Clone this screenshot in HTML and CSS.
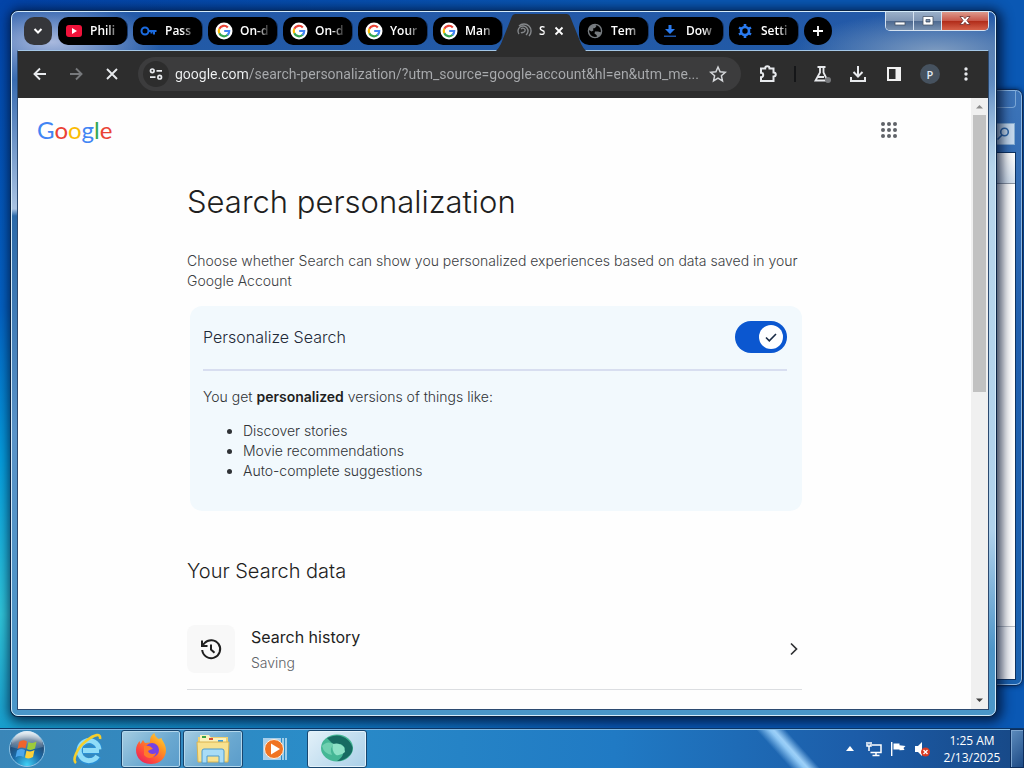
FILE: index.html
```html
<!DOCTYPE html>
<html lang="en">
<head>
<meta charset="utf-8">
<meta name="viewport" content="width=device-width, initial-scale=1">
<title>Search personalization</title>
<link rel="stylesheet" href="styles.css">
</head>
<body>
<svg class="defs" aria-hidden="true">
  <symbol id="g" viewBox="0 0 18 18">
    <circle cx="9" cy="9" r="8.500" fill="#fff"/>
    <g fill="none" stroke-width="2.2">
      <path d="M4.300 6.800A5.200 5.200 0 0 1 12.800 5.400" stroke="#ea4335"/>
      <path d="M4.300 11.300A5.200 5.200 0 0 1 4.300 6.700" stroke="#fbbc05"/>
      <path d="M12.700 12.800A5.200 5.200 0 0 1 4.300 11.200" stroke="#34a853"/>
      <path d="M9.2 9H14.200A5.200 5.200 0 0 1 12.500 12.900" stroke="#4285f4"/>
    </g>
  </symbol>
  <symbol id="globe" viewBox="0 0 16 16">
    <circle cx="8" cy="8" r="6.6" fill="none" stroke="#777c80" stroke-width="1.4"/>
    <path d="M2 5.5C3 3 5.500 1.600 8 1.500L9.500 3 8 5l-2 .6L6.400 7.500 4.500 8.600 2 7zM8 8.500h3l3.500 1-1.500 3L10.500 14.500 9.500 12 7.500 10.500z" fill="#777c80"/>
  </symbol>
</svg>

<div class="desktop">
  <main class="workspace">
    <section class="back-window" aria-label="Background window">
      <div class="back-bar"></div>
      <div class="back-search">
        <svg width="14" height="14" viewBox="0 0 14 14" fill="none" stroke="#2d67a8" stroke-width="1.600"><circle cx="8.500" cy="5" r="3.800"/><path d="M6 8 1.500 12.500"/></svg>
      </div>
      <div class="back-body"><div class="back-head"></div><div class="back-foot"></div></div>
    </section>

    <section class="window" aria-label="Browser">
      <div class="tabstrip">
        <button class="tab-search" aria-label="Search tabs"><svg width="12" height="12" viewBox="0 0 12 12" fill="none" stroke="#fff" stroke-width="2"><path d="M2.500 4 6 7.500 9.500 4"/></svg></button>
        <button class="tab"><svg width="18" height="14" viewBox="0 0 18 14"><rect x="1" y="1" width="16" height="12" rx="3" fill="#f0123a"/><path d="M7 4v6l5-3z" fill="#fff"/></svg><span>Phili</span></button>
        <button class="tab"><svg width="18" height="16" viewBox="0 0 18 16" fill="none" stroke="#1b6be0" stroke-width="2"><circle cx="5" cy="8" r="3.500"/><path d="M8.500 8H16.500M14 8v3.500M11.500 8v2.500"/></svg><span>Pass</span></button>
        <button class="tab"><svg width="18" height="18"><use href="#g"/></svg><span>On-d</span></button>
        <button class="tab"><svg width="18" height="18"><use href="#g"/></svg><span>On-d</span></button>
        <button class="tab"><svg width="18" height="18"><use href="#g"/></svg><span>Your</span></button>
        <button class="tab"><svg width="18" height="18"><use href="#g"/></svg><span>Man</span></button>
        <div class="tab-active">
          <svg class="tab-shape" viewBox="0 0 92 37" preserveAspectRatio="none" fill="#2d2d2d"><path d="M0 37Q3 34 5 30L16 3Q17 0 20 0H72Q75 0 76 3L87 30Q89 34 92 37z"/></svg>
          <svg class="spin" width="16" height="16" viewBox="0 0 16 16" fill="none" stroke="#85888b" stroke-width="1.400"><path d="M3 3A7 7 0 0 1 13 13"/><path d="M3 11A5 5 0 1 1 10 12"/><path d="M5 6c2-2 5 0 4 2s-3 1-4 2"/></svg>
          <span>S</span>
          <button class="tab-close" aria-label="Close tab"><svg width="10" height="10" viewBox="0 0 10 10" stroke="#fff" stroke-width="1.800"><path d="M1.500 1.500l7 7M8.500 1.500l-7 7"/></svg></button>
        </div>
        <button class="tab"><svg width="16" height="16"><use href="#globe"/></svg><span>Tem</span></button>
        <button class="tab"><svg width="16" height="16" viewBox="0 0 16 16" fill="#2a7bf0"><path d="M6.500 2h3v4H13l-5 5-5-5h3.500z"/><path d="M2 12.500h12V14H2z" fill="#1d54a8"/></svg><span>Dow</span></button>
        <button class="tab"><svg width="16" height="16" viewBox="0 0 16 16" fill="none" stroke="#2a7bf0"><circle cx="8" cy="8" r="4" stroke-width="2.600"/><path d="M8 1v3M8 12v3M2 4.500l2.500 1.500M11.500 10l2.500 1.500M2 11.500 4.500 10M11.500 6 14 4.500" stroke-width="2.600"/></svg><span>Setti</span></button>
        <button class="tab-new" aria-label="New tab"><svg width="12" height="12" viewBox="0 0 12 12" stroke="#fff" stroke-width="1.800"><path d="M6 1v10M1 6h10"/></svg></button>
        <div class="captions">
          <button class="cap" aria-label="Minimize"><svg width="14" height="12" viewBox="0 0 14 12"><rect x="2" y="7" width="10" height="3" fill="#fff" stroke="#4a5668" stroke-width=".8"/></svg></button>
          <button class="cap" aria-label="Maximize"><svg width="14" height="12" viewBox="0 0 14 12"><path d="M2 1.500h10v8.500H2zM5 4.500v2.500h4V4.500z" fill="#fff" fill-rule="evenodd" stroke="#4a5668" stroke-width=".8"/></svg></button>
          <button class="cap cap-close" aria-label="Close"><svg width="14" height="12" viewBox="0 0 14 12"><path d="M2 1.500h3.200L7 3.700 8.800 1.500H12L8.900 5.500 12 9.500H8.800L7 7.300 5.200 9.500H2L5.100 5.500z" fill="#fff" stroke="#6a3030" stroke-width=".8"/></svg></button>
        </div>
      </div>

      <div class="client">
        <nav class="toolbar" aria-label="Navigation">
          <button class="tool" aria-label="Back"><svg width="16" height="16" viewBox="0 0 16 16" fill="none" stroke="#e8eaed" stroke-width="1.900"><path d="M14 8H3M8 2.500 2.500 8 8 13.500"/></svg></button>
          <button class="tool" aria-label="Forward"><svg width="16" height="16" viewBox="0 0 16 16" fill="none" stroke="#77797c" stroke-width="1.900"><path d="M2 8h11M8 2.500 13.500 8 8 13.500"/></svg></button>
          <button class="tool" aria-label="Stop"><svg width="16" height="16" viewBox="0 0 16 16" fill="none" stroke="#e8eaed" stroke-width="1.900"><path d="M3 3l10 10M13 3 3 13"/></svg></button>
          <div class="omnibox">
            <button class="site-info" aria-label="Site information"><svg width="14" height="14" viewBox="0 0 14 14" fill="none" stroke="#e8eaed" stroke-width="1.700"><circle cx="3.300" cy="3.800" r="1.800"/><path d="M7.500 3.800H13M1 10.200h5.500"/><circle cx="10.700" cy="10.200" r="1.800"/></svg></button>
            <input class="url" type="text" aria-label="Address" value="google.com/search-personalization/?utm_source=google-account&amp;hl=en&amp;utm_me...">
            <button class="star" aria-label="Bookmark"><svg width="18" height="18" viewBox="0 0 18 18" fill="none" stroke="#d5d7da" stroke-width="1.500"><path d="M9 2l2.100 4.800 5.200.5-3.900 3.500 1.100 5.100L9 13.200l-4.500 2.700 1.100-5.100L1.700 7.300l5.200-.5z"/></svg></button>
          </div>
          <div class="actions">
            <button class="tool" aria-label="Extensions"><svg width="20" height="20" viewBox="0 0 20 20" fill="none" stroke="#e8eaed" stroke-width="2"><path d="M3 4.500h4.200c0-3 4.300-3 4.300 0H15.500V8.500c3 0 3 4 0 4V17H3v-3.800c3 0 3-4.500 0-4.500z"/></svg></button>
            <span class="rule"></span>
            <button class="tool" aria-label="Labs"><svg width="20" height="20" viewBox="0 0 20 20" fill="none" stroke="#e8eaed" stroke-width="1.800"><path d="M5.500 3h8M8 3v5.500L3.500 16.500h12L11.500 8.500V3M6 13h6"/><circle cx="16" cy="16" r="3" fill="#77797c" stroke="none"/></svg></button>
            <button class="tool" aria-label="Downloads"><svg width="18" height="18" viewBox="0 0 18 18" fill="none" stroke="#e8eaed" stroke-width="2"><path d="M9 1v10M4.500 7 9 11.500 13.500 7M2 12v4h14v-4"/></svg></button>
            <button class="tool" aria-label="Side panel"><svg width="16" height="16" viewBox="0 0 16 16"><rect x="2" y="2" width="12" height="12" fill="none" stroke="#f1f1f1" stroke-width="2"/><path d="M9.500 2H14v12H9.500z" fill="#f1f1f1"/></svg></button>
            <button class="tool" aria-label="Profile"><span class="avatar">P</span></button>
            <button class="tool" aria-label="Menu"><svg width="16" height="16" viewBox="0 0 16 16" fill="#e8eaed"><circle cx="8" cy="3" r="1.700"/><circle cx="8" cy="8" r="1.700"/><circle cx="8" cy="13" r="1.700"/></svg></button>
          </div>
        </nav>

        <div class="viewport">
          <div class="page">
            <header class="page-head">
              <a class="logo" href="#" aria-label="Google"><span class="b">G</span><span class="r">o</span><span class="y">o</span><span class="b">g</span><span class="n">l</span><span class="r">e</span></a>
              <button class="apps" aria-label="Google apps"><svg width="18" height="18" viewBox="0 0 18 18" fill="#5f6368"><circle cx="3" cy="3" r="2"/><circle cx="9" cy="3" r="2"/><circle cx="15" cy="3" r="2"/><circle cx="3" cy="9" r="2"/><circle cx="9" cy="9" r="2"/><circle cx="15" cy="9" r="2"/><circle cx="3" cy="15" r="2"/><circle cx="9" cy="15" r="2"/><circle cx="15" cy="15" r="2"/></svg></button>
            </header>
            <article class="content">
              <h1>Search personalization</h1>
              <p class="lead">Choose whether Search can show you personalized experiences based on data saved in your Google Account</p>
              <section class="card">
                <div class="card-head">
                  <label for="personalize">Personalize Search</label>
                  <span class="switch">
                    <input id="personalize" type="checkbox" role="switch" checked>
                    <svg width="24" height="24" viewBox="0 0 24 24"><circle cx="12" cy="12" r="12" fill="#fff"/><path d="M7 12.500l3.300 3.300L17 9" fill="none" stroke="#1a2b45" stroke-width="1.600"/></svg>
                  </span>
                </div>
                <p>You get <b>personalized</b> versions of things like:</p>
                <ul>
                  <li>Discover stories</li>
                  <li>Movie recommendations</li>
                  <li>Auto-complete suggestions</li>
                </ul>
              </section>
              <h2>Your Search data</h2>
              <a class="row" href="#">
                <span class="row-icon"><svg width="24" height="24" viewBox="0 0 24 24" fill="none" stroke="#1f1f1f" stroke-width="2"><path d="M3.200 13A9 9 0 1 0 5.500 6.100L3.500 8.200M3 3.500V9h5.500M12 7.500V12.500l3.500 3.300"/></svg></span>
                <span class="row-text"><span class="row-title">Search history</span><span class="row-sub">Saving</span></span>
                <svg width="16" height="16" viewBox="0 0 16 16" fill="none" stroke="#303134" stroke-width="1.700"><path d="M5 2.500 10.500 8 5 13.500"/></svg>
              </a>
            </article>
          </div>
          <div class="scrollbar">
            <svg width="17" height="17" viewBox="0 0 17 17"><path d="M5 10.500h7L8.500 7z" fill="#8b8b8b"/></svg>
            <div class="track"><div class="thumb"></div></div>
            <svg width="17" height="17" viewBox="0 0 17 17"><path d="M5 6.500h7L8.500 10z" fill="#404040"/></svg>
          </div>
        </div>
      </div>
    </section>
  </main>

  <footer class="taskbar">
    <button class="start" aria-label="Start">
      <svg width="38" height="38" viewBox="0 0 38 38">
        <defs>
          <radialGradient id="orb" cx=".5" cy=".95" r=".9"><stop offset="0" stop-color="#3fd0f5"/><stop offset=".45" stop-color="#1b6ba8"/><stop offset=".8" stop-color="#23476e"/><stop offset="1" stop-color="#9fb9cc"/></radialGradient>
          <linearGradient id="gloss" x2="0" y2="1"><stop offset="0" stop-color="#fff" stop-opacity=".75"/><stop offset="1" stop-color="#fff" stop-opacity=".1"/></linearGradient>
        </defs>
        <circle cx="19" cy="19" r="17.500" fill="url(#orb)" stroke="#8fc3e4"/>
        <path d="M3 17A16 16 0 0 1 35 17Q19 22 3 17z" fill="url(#gloss)"/>
        <path d="M11 12q4-3 8-.5L17.500 18.500q-4-2-8 .5z" fill="#f0642c"/>
        <path d="M20.500 12q4 2 8-.5L27 18.500q-4 2.500-8 .5z" fill="#9ccb3b"/>
        <path d="M9 20.500q4-2.500 8-.5L15.500 27q-4-2-8 .5z" fill="#4ba6ec"/>
        <path d="M18.500 20.500q4 2 8-.5L25 27q-4 2.500-8 .5z" fill="#fbd03b"/>
      </svg>
    </button>
    <button class="task" aria-label="Internet Explorer">
      <svg width="34" height="34" viewBox="0 0 34 34" fill="none">
        <path d="M28.500 18.500H12M27 24A10 10 0 1 1 28 17" stroke="#2b8fd4" stroke-width="7"/>
        <path d="M28 18.500H12M26.500 24A10 10 0 1 1 28 17.500" stroke="#8fdcf8" stroke-width="5"/>
        <path d="M5 31C1 28 6 16 15 9S30 1 29 7" stroke="#f5cf2d" stroke-width="2.600"/>
      </svg>
    </button>
    <button class="task task-open" aria-label="Firefox">
      <svg width="34" height="34" viewBox="0 0 34 34">
        <defs><linearGradient id="fox" x1="1" y1="0" x2=".2" y2="1"><stop offset="0" stop-color="#ffe33d"/><stop offset=".4" stop-color="#ff9422"/><stop offset=".75" stop-color="#ff4a3d"/><stop offset="1" stop-color="#e8245e"/></linearGradient></defs>
        <path d="M17 32C8 32 2 26 2 18c0-4 2-7 3.500-9l1 3L9 8l2 3 5-.5C16 6 17 3 20.500 1c0 3 2 4 4 6l3-1c0 2 4.500 6 4.500 12 0 8-6 14-15 14z" fill="url(#fox)"/>
        <circle cx="18" cy="18" r="7" fill="#7542e5"/>
        <path d="M10 14c4-1 7 0 9 3-2 0-3 1-5 2 1 3 5 4 8 2-1 5-8 7-12 2z" fill="#ff7a2a"/>
      </svg>
    </button>
    <button class="task task-open" aria-label="File Explorer">
      <svg width="34" height="34" viewBox="0 0 34 34">
        <path d="M2 5h30v23H2z" fill="#efd071"/><path d="M4 3h9l2 3h15v5H4z" fill="#faf1bd"/><path d="M6 4h4v2H6z" fill="#3aa243"/><path d="M13 6h4v2h-4z" fill="#d64c33"/><path d="M22 8h5v2h-5z" fill="#3d9bd9"/>
        <path d="M1 10h32l-1 20H2z" fill="#f8e18f" stroke="#d9b451"/>
        <path d="M6 31V19q0-2 2-2h18q2 0 2 2v12h-5v-7H11v7z" fill="#a8dcf7" stroke="#4f9bcc"/>
      </svg>
    </button>
    <button class="task" aria-label="Media Player">
      <svg width="28" height="28" viewBox="0 0 28 28">
        <path d="M2 3h18v22H2z" fill="#a9cfea"/><path d="M22 3v22M25 3v22" stroke="#c5e3f5" stroke-width="1.500"/>
        <circle cx="13" cy="14" r="9.500" fill="#f07422" stroke="#fff0df"/><path d="M10 8.500v11l9-5.500z" fill="#fff"/>
      </svg>
    </button>
    <button class="task task-current" aria-label="Browser">
      <svg width="36" height="30" viewBox="0 0 36 30">
        <ellipse cx="18" cy="14" rx="16" ry="13.500" fill="#45b795"/>
        <path d="M8 4Q20-2 29 6q8 8 2 15-6 6-13 6 5-3 6-7l2-6-4-4-7 1z" fill="#176b62"/>
        <path d="M3 12Q8 6 15 10q-5 4-2 11-8-1-10-9z" fill="#6fd0b0"/>
        <path d="M14 10q6-2 11 3l1 5q-4 4-9 3-5-4-3-11z" fill="#8de2c6"/>
      </svg>
    </button>
    <div class="tray">
      <button class="tray-icon" aria-label="Show hidden icons"><svg width="8" height="5" viewBox="0 0 8 5"><path d="M0 5h8L4 0z" fill="#fff"/></svg></button>
      <button class="tray-icon" aria-label="Network"><svg width="16" height="16" viewBox="0 0 16 16" fill="none" stroke="#fff" stroke-width="1.500"><path d="M6 4h9v7.500H4.500M10 12v2.500M6.500 14.500h7"/><path d="M1 1v4h4V1M3 1v2.500M3 5v5"/></svg></button>
      <button class="tray-icon" aria-label="Action Center"><svg width="16" height="16" viewBox="0 0 16 16" fill="#fff"><path d="M1 1h1.400v14H1zM3.500 2.500h6v1.800l6 .7-2 2 1 2-5 .3V8.500h-6z"/></svg></button>
      <button class="tray-icon" aria-label="Volume muted"><svg width="16" height="16" viewBox="0 0 16 16"><path d="M1 5h3l4-4v14l-4-4H1z" fill="#fff"/><circle cx="11.500" cy="11" r="4.500" fill="#d93a22"/><path d="M9.500 9l4 4M13.500 9l-4 4" stroke="#fff" stroke-width="1.300"/></svg></button>
      <div class="clock"><time>1:25 AM</time><span>2/13/2025</span></div>
      <button class="show-desktop" aria-label="Show desktop"></button>
    </div>
  </footer>
</div>
</body>
</html>
```

FILE: styles.css
```css
* { box-sizing: border-box; }

body {
  margin: 0;
  font-family: "Open Sans", sans-serif;
}

button {
  padding: 0;
  border: 0;
  background: none;
  font: inherit;
  color: inherit;
}

svg { display: block; flex: none; }
.defs { position: absolute; width: 0; height: 0; }

.desktop {
  display: flex;
  flex-direction: column;
  min-height: 100vh;
  background:
    linear-gradient(90deg, transparent 2%, #0a58b4 60%),
    linear-gradient(#0344a8, #0462c4 40%, #05a0e0 60%, #30c8dc 80%, #0f8fc8);
}

.workspace { position: relative; flex: 1; overflow: hidden; }

/* Window behind the browser */
.back-window {
  position: absolute;
  inset: 89px 1px 42px 60%;
  display: flex;
  flex-direction: column;
  padding: 0 6px 5px;
  border: 1px solid #0d2a55;
  border-radius: 7px;
  background: linear-gradient(#3d74b8, #205fae 40%, #1a62b0);
  box-shadow: inset 0 0 0 1px #8db8e4, 0 0 5px #00204c;
}
.back-bar {
  height: 18px;
  border: 1px solid #7aa6d6;
  border-top: 0;
  border-radius: 0 0 4px 4px;
}
.back-search {
  display: flex;
  align-items: center;
  justify-content: flex-end;
  height: 22px;
  margin: 15px 1px 7px 0;
  padding-right: 4px;
  border: 1px solid #86add2;
  background: #c5daee;
}
.back-body {
  display: flex;
  flex: 1;
  flex-direction: column;
  justify-content: space-between;
  border: 1px solid #0e3464;
  background: #fff;
}
.back-head { height: 31px; border-bottom: 1px solid #8b95a2; background: linear-gradient(#fff, #d3e0ee); }
.back-foot { height: 53px; border-top: 1px solid #b9bec6; background: #f6f8fb; }

/* Browser window */
.window {
  position: absolute;
  inset: 11px 28px 12px 11px;
  display: flex;
  flex-direction: column;
  padding: 0 6px 5px 5px;
  border: 1px solid #d4ebfa;
  border-radius: 7px;
  background:
    radial-gradient(ellipse 110px 40px at 40px 30px, #a9b9de, transparent),
    radial-gradient(ellipse 140px 40px at 94% 40px, #7f9cc0, transparent),
    linear-gradient(transparent, #b8d6ec 20%, #b0d2ec 80%, transparent) right 40px / 8px 85% no-repeat,
    linear-gradient(#2359a8, #225aa6 6%, #a9c3e2 28%, #2b69a8 29%, #5a93c8 60%, #4a96c8);
  box-shadow: 0 0 0 1px #0a2344, 2px 2px 12px 4px rgba(0, 15, 45, .8);
}

.tabstrip {
  display: flex;
  align-items: center;
  gap: 6px;
  height: 38px;
  padding-left: 7px;
}
.tab, .tab-search, .tab-new {
  display: flex;
  align-items: center;
  height: 28px;
  border-radius: 10px;
  background: #000;
}
.tab-search { justify-content: center; width: 28px; background: #35363a; }
.tab-new { justify-content: center; width: 28px; border-radius: 50%; }
.tab {
  flex: 0 1 69px;
  gap: 7px;
  padding: 0 6px 0 7px;
  min-width: 0;
  box-shadow: 3px 0 0 -2px #16396d;
}
.tab svg { width: 18px; }
.tab span, .tab-active span {
  flex: 1;
  color: #fff;
  font-size: 12px;
  font-weight: 600;
  line-height: 18px;
  text-align: left;
  white-space: nowrap;
  mask-image: linear-gradient(90deg, #000 55%, transparent);
}
.tab-active {
  position: relative;
  display: flex;
  align-items: center;
  gap: 7px;
  width: 65px;
  height: 28px;
  padding: 0 8px;
}
.tab-shape { position: absolute; inset: -3px -12px -7px; width: 90px; height: 37px; }
.spin, .tab-active span, .tab-close { position: relative; }
.tab-active span { flex: none; width: 8px; }

.captions {
  display: flex;
  align-self: flex-start;
  margin-left: auto;
  border: 1px solid #d5e2f0;
  border-top: 0;
  border-radius: 0 0 5px 5px;
  overflow: hidden;
}
.cap {
  display: grid;
  place-items: center;
  width: 28px;
  height: 18px;
  border-right: 1px solid #d5e2f0;
  background: linear-gradient(#9bb0c9, #8096b4 48%, #4c688f 50%, #7891b0);
}
.cap-close { width: 46px; border: 0; background: linear-gradient(#dd9a8c, #c8584a 48%, #b02a18 50%, #d5614a); }

.client {
  display: flex;
  flex: 1;
  flex-direction: column;
  min-height: 0;
  border: 1px solid #2c4a70;
  border-top-color: #a4c7e6;
}

.toolbar {
  display: flex;
  align-items: center;
  height: 47px;
  padding: 0 4px 1px;
  background: #2d2d2d;
}
.tool { display: grid; place-items: center; width: 36px; height: 32px; }
.omnibox {
  display: flex;
  flex: 1;
  align-items: center;
  height: 34px;
  min-width: 0;
  margin-left: 8px;
  padding: 0 14px 0 5px;
  border-radius: 17px;
  background: #3c3c3d;
}
.site-info {
  display: grid;
  place-items: center;
  width: 26px;
  height: 26px;
  border-radius: 50%;
  background: #2d2d2d;
}
.url {
  flex: 1;
  min-width: 0;
  margin: 0 4px 0 6px;
  padding: 0;
  border: 0;
  outline: 0;
  background: linear-gradient(90deg, #f1f3f4 74px, #a9abae 74px);
  background-clip: text;
  color: transparent;
  font-family: Roboto, sans-serif;
  font-size: 14px;
  line-height: 20px;
}
.actions { display: flex; align-items: center; margin-left: 9px; }
.rule { width: 2px; height: 16px; margin: 0 8px; background: #151618; }
.avatar {
  display: grid;
  place-items: center;
  width: 20px;
  height: 20px;
  border-radius: 50%;
  background: #46525f;
  color: #e2ebf5;
  font-size: 11px;
  font-weight: 600;
}

.viewport { display: flex; flex: 1; min-height: 0; }
.page {
  flex: 1;
  min-width: 0;
  overflow: hidden;
  background: #fefefe;
  color: #1f1f1f;
  font-family: Inter, sans-serif;
}
.page-head {
  display: flex;
  align-items: center;
  justify-content: space-between;
  height: 64px;
  padding: 0 73px 0 19px;
}
.logo {
  font-family: Lato, sans-serif;
  font-size: 24px;
  line-height: 32px;
  text-decoration: none;
}
.b { color: #4285f4; }
.r { color: #ea4335; }
.y { color: #fbbc05; }
.n { color: #34a853; }

.content { max-width: 615px; margin: 0 auto; }
h1 { margin: 20px 0 29px; font-size: 31px; font-weight: 300; line-height: 40px; }
.lead { margin: 0; color: #3c4043; font-size: 14px; font-weight: 300; line-height: 20px; }
.card {
  margin: 15px 0 0 3px;
  padding: 0 15px 30px 13px;
  border-radius: 12px;
  background: #f2f9fd;
  color: #303336;
  font-size: 14px;
  font-weight: 300;
  line-height: 20px;
}
.card-head {
  display: flex;
  align-items: center;
  justify-content: space-between;
  height: 65px;
  padding-bottom: 2px;
  border-bottom: 2px solid #d8def0;
}
.card-head label { color: #1f2a38; font-size: 16px; font-weight: 300; line-height: 24px; }
.card p { margin: 16px 0 14px; }
.card b { color: #1f1f1f; font-weight: 600; }
.card ul { margin: 0; padding-left: 40px; }
.switch { position: relative; display: flex; }
.switch input {
  width: 52px;
  height: 32px;
  margin: 0;
  border-radius: 16px;
  background: #0b57d0;
  appearance: none;
}
.switch svg { position: absolute; top: 4px; right: 4px; pointer-events: none; }

h2 { margin: 46px 0 40px; font-size: 20px; font-weight: 300; line-height: 28px; }
.row {
  display: flex;
  align-items: center;
  gap: 16px;
  padding-bottom: 16px;
  border-bottom: 1px solid #dcdee1;
  color: inherit;
  text-decoration: none;
}
.row-icon {
  display: grid;
  place-items: center;
  width: 48px;
  height: 48px;
  border-radius: 8px;
  background: #f8f8f8;
}
.row-text { display: flex; flex: 1; flex-direction: column; gap: 4px; }
.row-title { font-size: 16px; line-height: 24px; }
.row-sub { color: #5f6368; font-size: 14px; font-weight: 300; line-height: 20px; }

.scrollbar { display: flex; flex-direction: column; width: 17px; background: #f0f0f0; }
.track { flex: 1; padding: 0 2px; }
.thumb { height: 48%; background: #c1c1c1; }

/* Taskbar */
.taskbar {
  display: flex;
  align-items: center;
  height: 40px;
  border-top: 1px solid #0b3566;
  background:
    linear-gradient(48deg, transparent 38%, #8fc8f5 48%, #9dd0f8 51%, transparent 60%) 80% 0 / 100px 100% no-repeat,
    linear-gradient(90deg, #3a86b8, #2a8cc8 30%, #207ac4 60%, #1c5ca8 84%, #174886);
  box-shadow: inset 0 1px 0 #7fb8e4;
}
.start { display: grid; place-items: center; width: 54px; }
.task {
  display: grid;
  place-items: center;
  width: 60px;
  height: 38px;
  margin-right: 2px;
  border: 1px solid transparent;
  border-radius: 3px;
}
.start + .task { margin: 0 3px 0 4px; }
.task-open {
  border-color: #17466f;
  background: linear-gradient(135deg, #a6cde2, #6aa8d0 60%, #5a9cca);
  box-shadow: inset 0 0 0 1px #b4d8ec;
}
.task-current {
  border-color: #17466f;
  background: linear-gradient(135deg, #e3f1f9, #a9cfe8);
  box-shadow: inset 0 0 0 1px #e3f2fb;
}
.tray { display: flex; align-items: center; height: 100%; margin-left: auto; color: #fff; }
.tray-icon { display: grid; place-items: center; width: 24px; height: 24px; }
.clock {
  display: flex;
  flex-direction: column;
  align-items: center;
  width: 76px;
  font-size: 12px;
  line-height: 17px;
}
.show-desktop {
  width: 14px;
  height: 100%;
  border: 1px solid #0c2e5e;
  background: linear-gradient(135deg, #5d8cbd, #1d4a85);
  box-shadow: inset 1px 1px 0 #7da5cf;
}
```
